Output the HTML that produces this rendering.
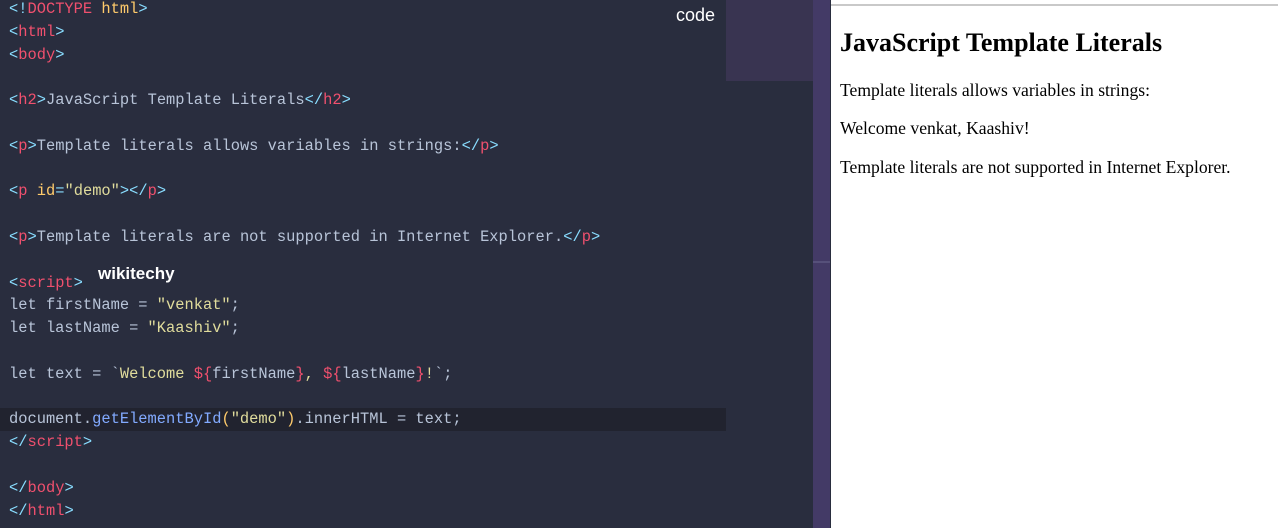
<!DOCTYPE html>
<html><head><style>
html,body{margin:0;padding:0;width:1278px;height:528px;overflow:hidden;background:#292d3e;}
#code{position:absolute;left:0;top:0;width:813px;height:528px;background:#292d3e;}
pre{margin:0;position:absolute;left:9px;top:-2px;font-family:"Liberation Mono",monospace;font-size:15.4px;line-height:22.8px;color:#b8c4d8;}
.b{color:#89ddff}.t{color:#f0506e}.y{color:#ffcb6b}.s{color:#e0dc9c}.f{color:#82aaff}
#hl{position:absolute;left:0;top:408px;width:726px;height:23px;background:#21232f;}
#mini{position:absolute;left:726px;top:0;width:87px;height:81px;background:#393451;}
#sb{position:absolute;left:813px;top:0;width:17px;height:528px;background:#433a66;}
#sbl{position:absolute;left:813px;top:261px;width:17px;height:2px;background:#56507a;}
#right{position:absolute;left:831px;top:0;width:447px;height:528px;background:#fff;}
#rline{position:absolute;left:831px;top:4px;width:447px;height:2px;background:#c9c9c9;}
#right h2{position:absolute;left:9px;top:28px;margin:0;font-family:"Liberation Serif",serif;font-size:26px;font-weight:bold;color:#000;white-space:nowrap;}
#right p{position:absolute;left:9px;margin:0;font-family:"Liberation Serif",serif;font-size:17.6px;color:#000;white-space:nowrap;}
.lbl{position:absolute;font-family:"Liberation Sans",sans-serif;font-weight:bold;color:#fff;}
</style></head><body>
<div id="code">
<div id="hl"></div>
<pre><span class="b">&lt;!</span><span class="t">DOCTYPE</span> <span class="y">html</span><span class="b">&gt;</span>
<span class="b">&lt;</span><span class="t">html</span><span class="b">&gt;</span>
<span class="b">&lt;</span><span class="t">body</span><span class="b">&gt;</span>

<span class="b">&lt;</span><span class="t">h2</span><span class="b">&gt;</span>JavaScript Template Literals<span class="b">&lt;/</span><span class="t">h2</span><span class="b">&gt;</span>

<span class="b">&lt;</span><span class="t">p</span><span class="b">&gt;</span>Template literals allows variables in strings:<span class="b">&lt;/</span><span class="t">p</span><span class="b">&gt;</span>

<span class="b">&lt;</span><span class="t">p</span> <span class="y">id</span><span class="b">=</span><span class="s">"demo"</span><span class="b">&gt;&lt;/</span><span class="t">p</span><span class="b">&gt;</span>

<span class="b">&lt;</span><span class="t">p</span><span class="b">&gt;</span>Template literals are not supported in Internet Explorer.<span class="b">&lt;/</span><span class="t">p</span><span class="b">&gt;</span>

<span class="b">&lt;</span><span class="t">script</span><span class="b">&gt;</span>
let firstName = <span class="s">"venkat"</span>;
let lastName = <span class="s">"Kaashiv"</span>;

let text = `<span class="s">Welcome </span><span class="t">${</span>firstName<span class="t">}</span><span class="s">, </span><span class="t">${</span>lastName<span class="t">}</span><span class="s">!</span>`;

document.<span class="f">getElementById</span><span class="y">(</span><span class="s">"demo"</span><span class="y">)</span>.innerHTML = text;
<span class="b">&lt;/</span><span class="t">script</span><span class="b">&gt;</span>

<span class="b">&lt;/</span><span class="t">body</span><span class="b">&gt;</span>
<span class="b">&lt;/</span><span class="t">html</span><span class="b">&gt;</span></pre>
<div class="lbl" style="left:98px;top:264px;font-size:17px;">wikitechy</div>
<div class="lbl" style="left:676px;top:5px;font-size:18px;font-weight:normal;">code</div>
</div>
<div id="mini"></div>
<div id="sb"></div><div id="sbl"></div>
<div id="right">
<h2>JavaScript Template Literals</h2>
<p style="top:80px">Template literals allows variables in strings:</p>
<p style="top:118px">Welcome venkat, Kaashiv!</p>
<p style="top:157px">Template literals are not supported in Internet Explorer.</p>
</div>
<div id="rline"></div>
</body></html>
